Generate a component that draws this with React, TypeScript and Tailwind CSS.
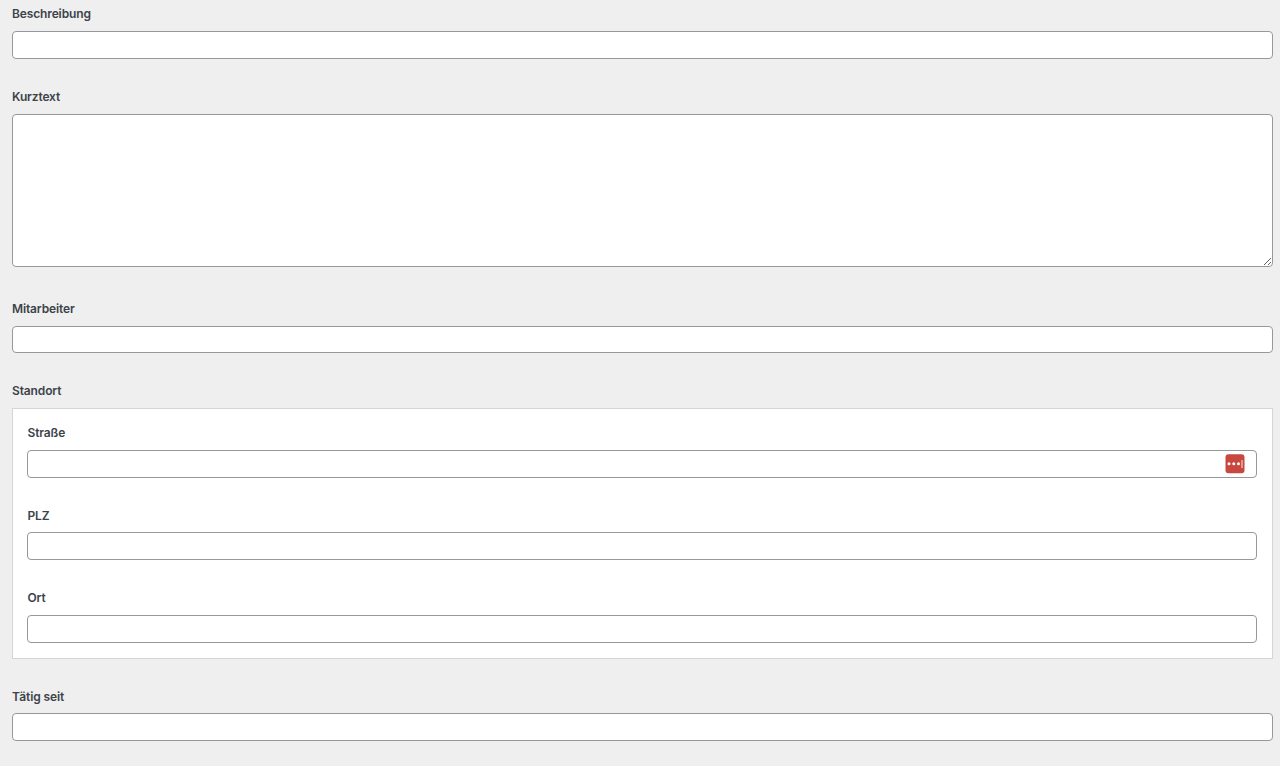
import React from 'react';

const control =
  'block w-full rounded-[4px] border border-[#97989c] bg-white px-2 text-xs text-[#2c3338] outline-none';

function Field({
  label,
  className = '',
  labelClassName = 'mb-[7px]',
  children,
}: {
  label: string;
  className?: string;
  labelClassName?: string;
  children: React.ReactNode;
}) {
  return (
    <div className={className}>
      <div
        className={`h-5 text-[12px] leading-5 font-semibold tracking-[-0.13px] text-[#3c434a] ${labelClassName}`}
      >
        {label}
      </div>
      {children}
    </div>
  );
}

function TextInput({ label, height = 'h-7' }: { label: string; height?: string }) {
  return <input type="text" aria-label={label} className={`${control} ${height}`} />;
}

function PasswordBadge() {
  return (
    <svg className="absolute top-1 right-3 h-5 w-5" viewBox="0 0 20 20" aria-hidden="true">
      <rect x="0.5" y="0.3" width="19" height="19" rx="3" fill="#c84840" />
      <circle cx="4" cy="9.8" r="1.5" fill="#fff" />
      <circle cx="8.8" cy="9.8" r="1.5" fill="#fff" />
      <circle cx="13.5" cy="9.8" r="1.5" fill="#fff" />
      <rect x="16.3" y="6" width="1.4" height="8" fill="#f0b8b4" />
    </svg>
  );
}

export default function App() {
  return (
    <main className="h-[766px] overflow-hidden bg-[#efefef] pt-1 pr-[7px] pl-3 font-['Inter',sans-serif]">
      <Field label="Beschreibung">
        <TextInput label="Beschreibung" />
      </Field>
      <Field label="Kurztext" className="mt-7">
        <textarea aria-label="Kurztext" className={`${control} h-[153px] resize-y`} />
      </Field>
      <Field label="Mitarbeiter" className="mt-8">
        <TextInput label="Mitarbeiter" height="h-[27px]" />
      </Field>
      <Field label="Standort" className="mt-7">
        <div className="h-[251px] border border-[#d3d5d8] bg-white pt-3.5 pr-[15px] pl-3.5">
          <Field label="Straße" labelClassName="mb-[7px] pl-[0.5px]">
            <div className="relative">
              <TextInput label="Straße" />
              <PasswordBadge />
            </div>
          </Field>
          <Field label="PLZ" className="mt-7" labelClassName="mb-1.5 pl-[0.5px]">
            <TextInput label="PLZ" />
          </Field>
          <Field label="Ort" className="mt-7" labelClassName="mb-[7px] pl-[0.5px]">
            <TextInput label="Ort" />
          </Field>
        </div>
      </Field>
      <Field label="Tätig seit" className="mt-7" labelClassName="mb-1.5">
        <TextInput label="Tätig seit" />
      </Field>
    </main>
  );
}
